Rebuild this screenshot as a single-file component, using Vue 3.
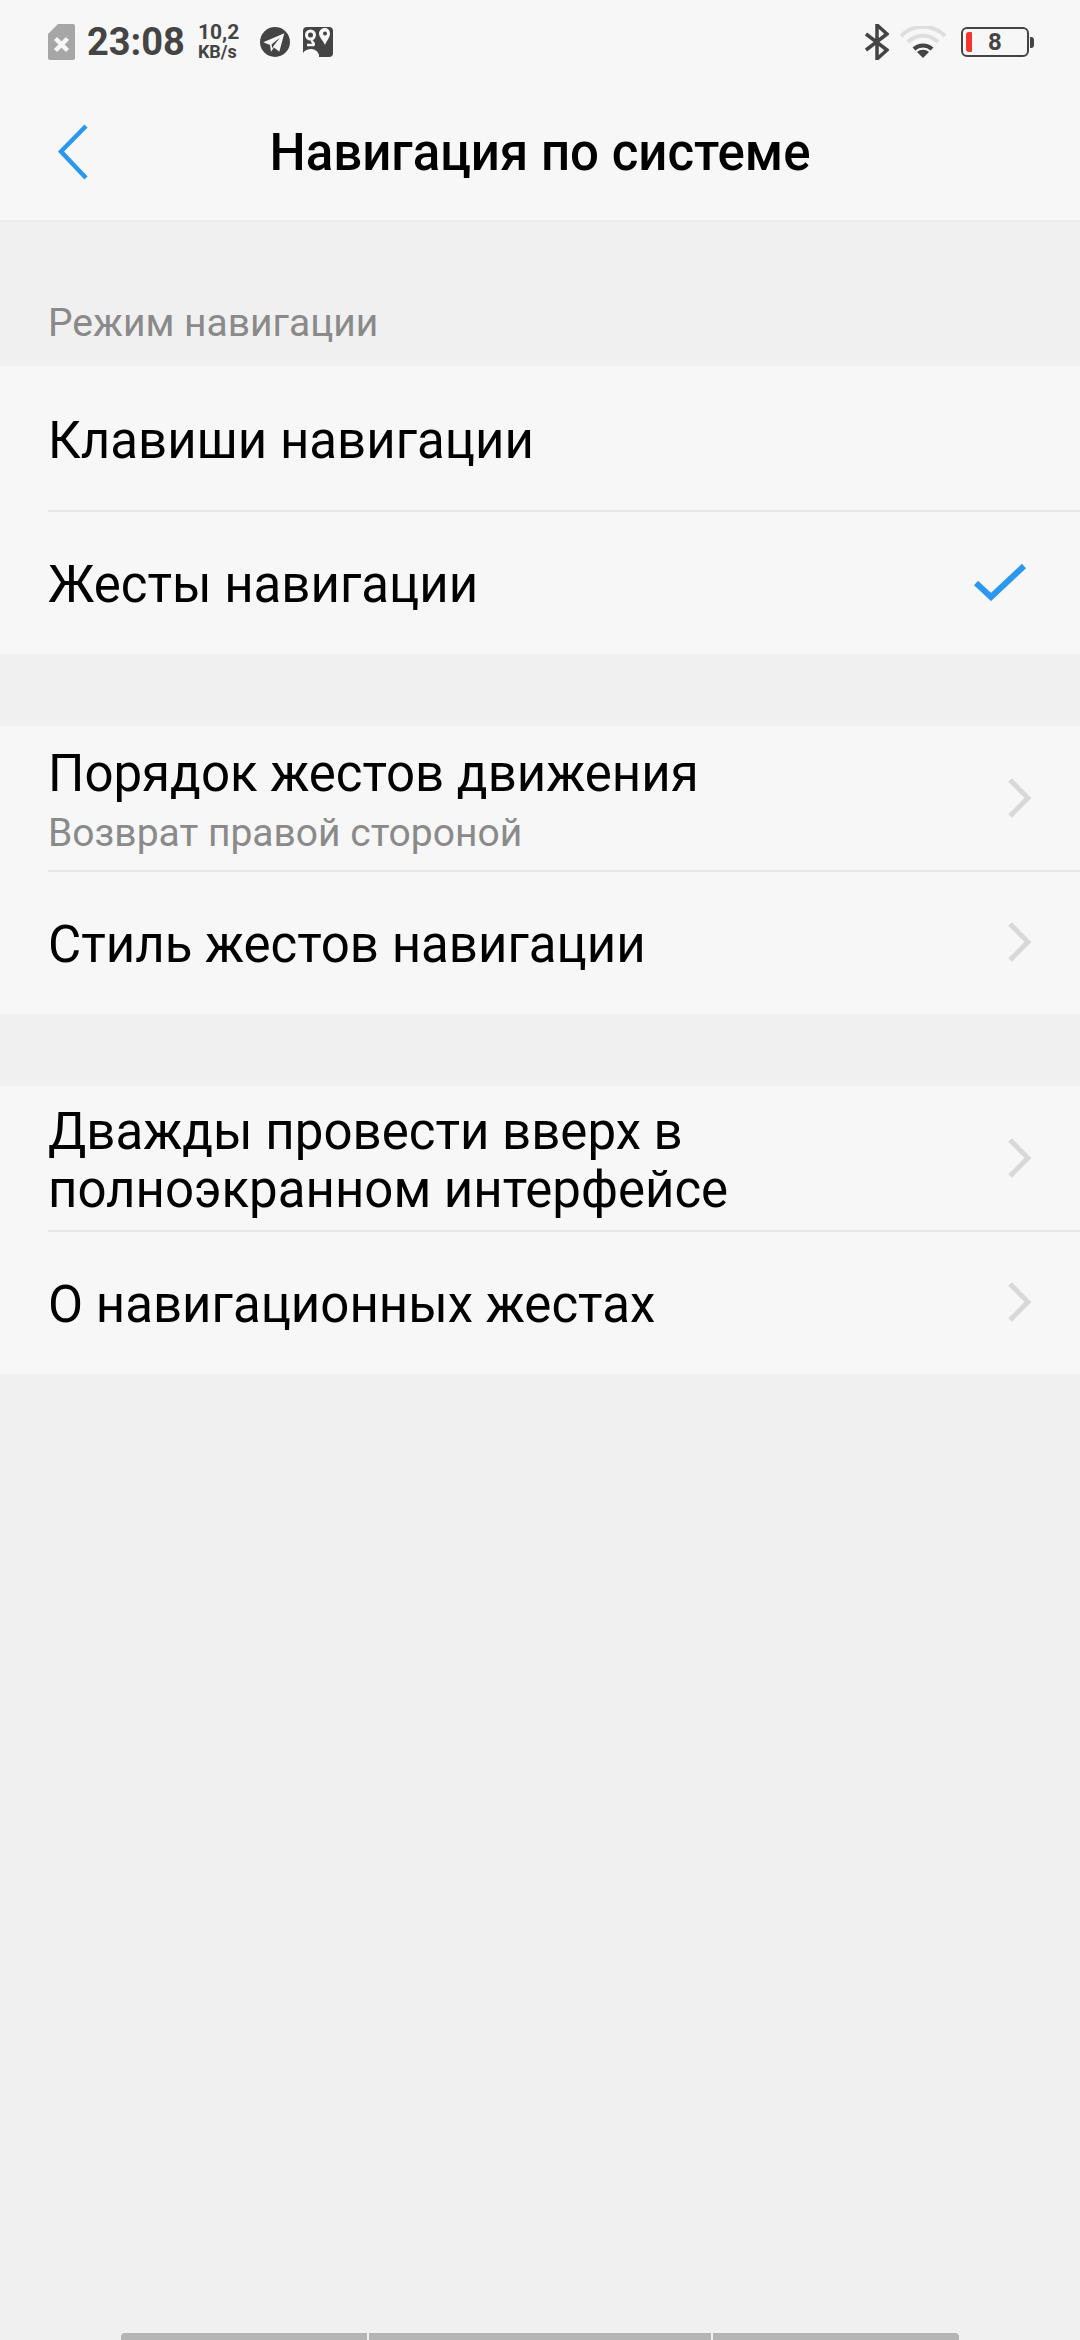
<template>
  <div class="screen">
    <header class="top">
      <div class="status">
        <div class="status-left">
          <svg class="sim" width="27" height="36" viewBox="0 0 27 36">
            <path d="M10 0H25a2 2 0 0 1 2 2V34a2 2 0 0 1-2 2H2a2 2 0 0 1-2-2V10z" fill="#a6a6a6" />
            <path d="M7.500 14.500l12 12M19.500 14.500l-12 12" stroke="#f7f7f7" stroke-width="4.500" fill="none" />
          </svg>
          <span class="time">23:08</span>
          <span class="speed"><b>10,2</b><b class="unit">KB/s</b></span>
          <svg class="tg" width="30" height="30" viewBox="0 0 30 30">
            <circle cx="15" cy="15" r="15" fill="#444" />
            <path d="M24.300 6.300L3.300 15.300 10 18l1 6.700 3-4.200 5.300 4.200zM11.500 17.500L20 10.500l-6.500 8.500-1 2.500z" fill="#f7f7f7" />
          </svg>
          <svg class="gmaps" width="30" height="30" viewBox="0 0 30 30">
            <rect width="30" height="30" rx="4" fill="#444" />
            <path d="M22 1c-3.600 0-6 2.600-6 5.600 0 3.800 4 7 6 11.400 2-4.400 5-7.600 5-11.400C27 3.600 25 1 22 1z" fill="#f7f7f7" />
            <circle cx="22" cy="6.500" r="2" fill="#444" />
            <circle cx="7.500" cy="8" r="4" fill="none" stroke="#f7f7f7" stroke-width="3" />
            <path d="M9 13c-1 2 3 3 1.500 5H4" fill="none" stroke="#f7f7f7" stroke-width="2.500" />
            <path d="M0 26c2-3 5-4 8-4s7 2 8 6v2H0z" fill="#f7f7f7" />
          </svg>
        </div>
        <div class="status-right">
          <svg width="24" height="36" viewBox="0 0 24 36">
            <path d="M1 10l21 16-10 9V1l10 9L1 26" fill="none" stroke="#444" stroke-width="3.500" />
          </svg>
          <svg width="46" height="32" viewBox="0 0 46 32">
            <path d="M1 10a31 31 0 0 1 44 0" fill="none" stroke="#dedede" stroke-width="4" />
            <path d="M8 16a21 21 0 0 1 30 0" fill="none" stroke="#dedede" stroke-width="4" />
            <path d="M14 23a13 13 0 0 1 18 0" fill="none" stroke="#444" stroke-width="4" />
            <path d="M17 26a9 9 0 0 1 12 0l-6 6z" fill="#444" />
          </svg>
          <div class="battery">
            <span class="level"></span>
            <span class="num">8</span>
            <span class="nub"></span>
          </div>
        </div>
      </div>
      <div class="toolbar">
        <svg class="back" width="32" height="56" viewBox="0 0 32 56">
          <path d="M29 2L4 27.500 29 54" fill="none" stroke="#2b98f0" stroke-width="4.500" />
        </svg>
        <h1>Навигация по системе</h1>
      </div>
    </header>

    <div class="section-label">Режим навигации</div>

    <section v-for="(group, g) in groups" :key="g" class="group">
      <div v-for="(row, i) in group" :key="i" class="row">
        <div class="row-text">
          <div class="row-title">{{ row.title }}</div>
          <div v-if="row.sub" class="row-sub">{{ row.sub }}</div>
        </div>
        <svg v-if="row.icon === 'check'" class="check" width="52" height="38" viewBox="0 0 52 38">
          <path d="M2 20l15 14L50 3" fill="none" stroke="#2b98f0" stroke-width="6" />
        </svg>
        <svg v-else-if="row.icon === 'more'" class="more" width="24" height="40" viewBox="0 0 24 40">
          <path d="M2 2l18 18L2 38" fill="none" stroke="#d8d8d8" stroke-width="5" />
        </svg>
      </div>
    </section>

    <div class="home-bar">
      <span class="seg seg-a"></span>
      <span class="seg seg-b"></span>
      <span class="seg seg-c"></span>
    </div>
  </div>
</template>

<script setup>
const groups = [
  [
    { title: 'Клавиши навигации' },
    { title: 'Жесты навигации', icon: 'check' },
  ],
  [
    { title: 'Порядок жестов движения', sub: 'Возврат правой стороной', icon: 'more' },
    { title: 'Стиль жестов навигации', icon: 'more' },
  ],
  [
    { title: 'Дважды провести вверх в полноэкранном интерфейсе', icon: 'more' },
    { title: 'О навигационных жестах', icon: 'more' },
  ],
]
</script>

<style>
html, body {
  margin: 0;
  background: #f0f0f0;
}
</style>

<style scoped>
.screen {
  position: relative;
  width: 1080px;
  height: 2340px;
  overflow: hidden;
  background: #f0f0f0;
  font-family: Roboto, "Noto Sans", sans-serif;
  color: #000;
}

.top {
  height: 220px;
  background: #f7f7f7;
  border-bottom: 2px solid #ececec;
}

.status {
  height: 84px;
  display: flex;
  align-items: center;
  justify-content: space-between;
  padding: 0 46px 0 48px;
  color: #444;
}

.status-left,
.status-right {
  display: flex;
  align-items: center;
}

.time {
  margin-left: 12px;
  font-size: 38px;
  font-weight: 700;
}

.speed {
  margin-left: 13px;
  display: flex;
  flex-direction: column;
  font-size: 21px;
  line-height: 20px;
}

.speed b {
  font-weight: 700;
}

.speed .unit {
  font-size: 18px;
}

.tg {
  margin-left: 21px;
}

.gmaps {
  margin-left: 13px;
}

.status-right {
  gap: 11px;
}

.battery {
  position: relative;
  margin-left: 4px;
  margin-right: 5px;
  width: 68px;
  height: 30px;
  box-sizing: border-box;
  border: 2px solid #444;
  border-radius: 6px;
  display: flex;
  align-items: center;
  justify-content: center;
}

.level {
  position: absolute;
  left: 3px;
  top: 3px;
  bottom: 3px;
  width: 6px;
  background: #f5352b;
  border-radius: 3px 1px 1px 3px;
}

.num {
  font-size: 24px;
  font-weight: 700;
  line-height: 1;
}

.nub {
  position: absolute;
  right: -7px;
  top: 8px;
  width: 4px;
  height: 11px;
  background: #444;
  border-radius: 0 3px 3px 0;
}

.toolbar {
  position: relative;
  height: 136px;
  display: flex;
  align-items: center;
  justify-content: center;
}

.back {
  position: absolute;
  left: 57px;
  top: 40px;
}

h1 {
  margin: 0;
  font-size: 51px;
  font-weight: 500;
}

.section-label {
  height: 144px;
  box-sizing: border-box;
  padding: 78px 0 0 48px;
  font-size: 39px;
  line-height: 46px;
  color: #8a8a8a;
}

.group {
  background: #f7f7f7;
  margin-bottom: 72px;
}

.row {
  position: relative;
  height: 144px;
  display: flex;
  align-items: center;
  justify-content: space-between;
  padding: 0 48px;
  box-sizing: border-box;
}

.row + .row::before {
  content: "";
  position: absolute;
  left: 48px;
  right: 0;
  top: 0;
  height: 2px;
  background: #e8e8e8;
}

.row-text {
  width: 860px;
}

.row-title {
  font-size: 51px;
  line-height: 58px;
  padding-top: 5px;
}

.row-sub {
  margin-top: 7px;
  font-size: 39px;
  line-height: 46px;
  color: #8a8a8a;
}

.check {
  margin-right: 6px;
}

.home-bar {
  position: absolute;
  left: 121px;
  bottom: 0;
  width: 838px;
  height: 7px;
  display: flex;
  gap: 2px;
}

.seg {
  background: #b5b5b5;
}

.seg-a {
  width: 246px;
  border-radius: 4px 0 0 0;
}

.seg-b {
  width: 342px;
}

.seg-c {
  flex: 1;
  border-radius: 0 4px 0 0;
}
</style>
